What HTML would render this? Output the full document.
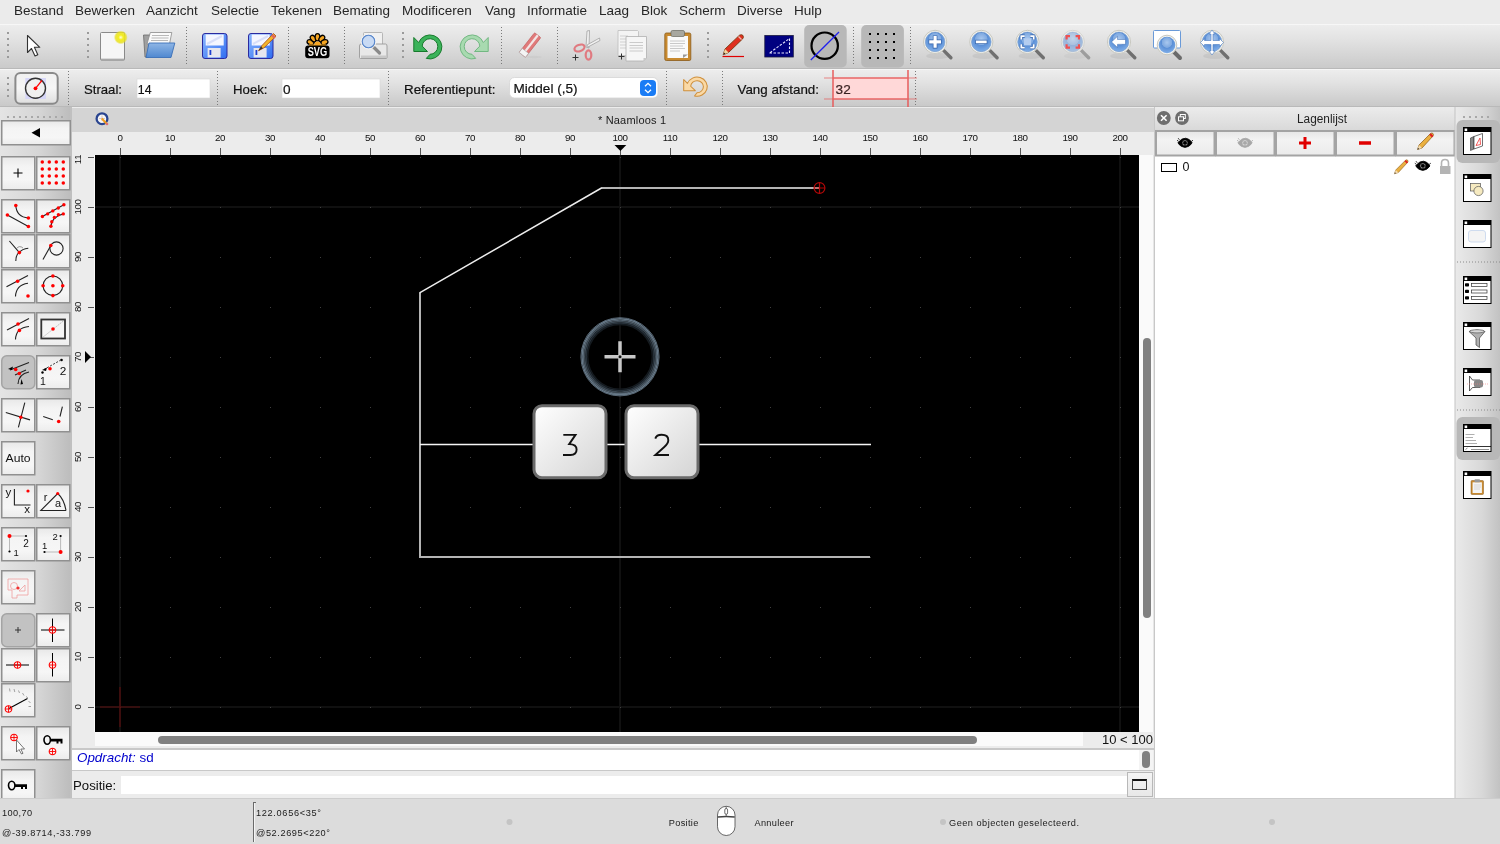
<!DOCTYPE html>
<html><head><meta charset="utf-8">
<style>
*{box-sizing:border-box}
html,body{margin:0;padding:0}
body{width:1500px;height:844px;position:relative;overflow:hidden;font-family:"Liberation Sans",sans-serif;background:#ececec;color:#222}
.a{position:absolute}
#menubar{left:0;top:0;width:1500px;height:24px;background:#ebebeb}
#menubar span{position:absolute;top:3.3px;font-size:13.5px;color:#262626;white-space:nowrap}
#tb1{left:0;top:24px;width:1500px;height:45px;background:linear-gradient(#ededed,#e2e2e2 35%,#cacaca);border-top:1px solid #f7f7f7;border-bottom:1px solid #b9b9b9}
#tb2{left:0;top:69px;width:1500px;height:38px;background:linear-gradient(#ededed,#e2e2e2 35%,#c9c9c9);border-top:1px solid #f6f6f6;border-bottom:1px solid #b9b9b9}
.sep{position:absolute;width:2px;border-left:2px dotted #8a8a8a}
#leftdock{left:0;top:107px;width:72px;height:691px;background:linear-gradient(90deg,#e6e6e6,#d8d8d8 60%,#c4c4c4);border-right:2px solid #c2c2c2}
.btn{position:absolute;width:34px;height:34px;background:linear-gradient(#f6f6f6,#ececec 50%,#e2e2e2);border:1.5px solid #9c9c9c}
.btn.on{background:#c4c4c4;border-color:#a8a8a8;border-radius:5px}
#mdi{left:72px;top:107px;width:1083px;height:691px;background:#ececec}
#mdititle{left:0;top:0.5px;width:1083px;height:24.2px;background:#d4d4d4;font-size:12px;text-align:center;line-height:24px;color:#222}
#canvas{left:95px;top:155px;width:1044px;height:577px;background:#000;overflow:hidden}
#rpanel{left:1155px;top:107px;width:300px;height:691px;background:#fff;border-left:1px solid #cfcfcf}
#rdock{left:1455px;top:107px;width:45px;height:691px;background:linear-gradient(90deg,#e8e8e8,#d6d6d6 70%,#c6c6c6);border-left:1px solid #c8c8c8}
#status{left:0;top:798px;width:1500px;height:46px;background:#dcdcdc;font-size:10px;color:#1e1e1e;border-top:1px solid #cfcfcf}
#status span{position:absolute;white-space:nowrap;letter-spacing:0.3px}
</style></head>
<body><div id="root" style="position:absolute;left:0;top:0;width:1500px;height:844px;will-change:transform;overflow:hidden">
<div id="menubar" class="a">
<span style="left:14px">Bestand</span><span style="left:75px">Bewerken</span><span style="left:146px">Aanzicht</span><span style="left:211px">Selectie</span><span style="left:271px">Tekenen</span><span style="left:333px">Bemating</span><span style="left:402px">Modificeren</span><span style="left:485px">Vang</span><span style="left:527px">Informatie</span><span style="left:599px">Laag</span><span style="left:641px">Blok</span><span style="left:679px">Scherm</span><span style="left:737px">Diverse</span><span style="left:794px">Hulp</span>
</div>
<div id="tb1" class="a"></div>
<svg class="a" style="left:0;top:24px" width="1500" height="44" viewBox="0 24 1500 44">
<defs>
<radialGradient id="mg" cx="0.5" cy="0.35" r="0.6"><stop offset="0" stop-color="#a9c8ef"/><stop offset="0.5" stop-color="#7fa9e0"/><stop offset="0.55" stop-color="#5b8fd6"/><stop offset="1" stop-color="#7aaae6"/></radialGradient>
<radialGradient id="glow" cx="0.5" cy="0.5" r="0.5"><stop offset="0" stop-color="#fffde0"/><stop offset="0.35" stop-color="#f4ee20"/><stop offset="0.75" stop-color="#e8e018" stop-opacity="0.8"/><stop offset="1" stop-color="#e8e018" stop-opacity="0"/></radialGradient>
<linearGradient id="fl" x1="0" y1="0" x2="0" y2="1"><stop offset="0" stop-color="#8fb6e6"/><stop offset="1" stop-color="#4f88d0"/></linearGradient>
<linearGradient id="sv" x1="0" y1="0" x2="1" y2="1"><stop offset="0" stop-color="#8cb8ff"/><stop offset="1" stop-color="#2f6cf0"/></linearGradient>
<g id="mag"><ellipse cx="3" cy="14" rx="12" ry="3" fill="#000" opacity="0.06"/><path d="M8.5 8.5L15.8 15.8" stroke="#707070" stroke-width="3.4" stroke-linecap="round"/><circle r="11.6" fill="#f2f2ee" stroke="#c8c8c0" stroke-width="1"/><circle r="9.8" fill="url(#mg)" stroke="#6f95c8" stroke-width="0.6"/></g>
</defs>
<rect x="7" y="32" width="2" height="2" fill="#9a9a9a"/><rect x="7" y="38" width="2" height="2" fill="#9a9a9a"/><rect x="7" y="44" width="2" height="2" fill="#9a9a9a"/><rect x="7" y="50" width="2" height="2" fill="#9a9a9a"/><rect x="7" y="56" width="2" height="2" fill="#9a9a9a"/>
<rect x="87" y="32" width="2" height="2" fill="#9a9a9a"/><rect x="87" y="38" width="2" height="2" fill="#9a9a9a"/><rect x="87" y="44" width="2" height="2" fill="#9a9a9a"/><rect x="87" y="50" width="2" height="2" fill="#9a9a9a"/><rect x="87" y="56" width="2" height="2" fill="#9a9a9a"/>
<line x1="186.5" y1="27" x2="186.5" y2="66" stroke="#7a7a7a" stroke-width="1" stroke-dasharray="1 2"/>
<line x1="288.5" y1="27" x2="288.5" y2="66" stroke="#7a7a7a" stroke-width="1" stroke-dasharray="1 2"/>
<line x1="344.5" y1="27" x2="344.5" y2="66" stroke="#7a7a7a" stroke-width="1" stroke-dasharray="1 2"/>
<rect x="402" y="32" width="2" height="2" fill="#9a9a9a"/><rect x="402" y="38" width="2" height="2" fill="#9a9a9a"/><rect x="402" y="44" width="2" height="2" fill="#9a9a9a"/><rect x="402" y="50" width="2" height="2" fill="#9a9a9a"/><rect x="402" y="56" width="2" height="2" fill="#9a9a9a"/>
<line x1="501.5" y1="27" x2="501.5" y2="66" stroke="#7a7a7a" stroke-width="1" stroke-dasharray="1 2"/>
<line x1="557.5" y1="27" x2="557.5" y2="66" stroke="#7a7a7a" stroke-width="1" stroke-dasharray="1 2"/>
<rect x="707" y="32" width="2" height="2" fill="#9a9a9a"/><rect x="707" y="38" width="2" height="2" fill="#9a9a9a"/><rect x="707" y="44" width="2" height="2" fill="#9a9a9a"/><rect x="707" y="50" width="2" height="2" fill="#9a9a9a"/><rect x="707" y="56" width="2" height="2" fill="#9a9a9a"/>
<line x1="853.5" y1="27" x2="853.5" y2="66" stroke="#7a7a7a" stroke-width="1" stroke-dasharray="1 2"/>
<line x1="910.5" y1="27" x2="910.5" y2="66" stroke="#7a7a7a" stroke-width="1" stroke-dasharray="1 2"/>
<path d="M27.5 35.5V52.5L31.5 48.5L35 56L37.8 54.7L34.4 47.3H39.8Z" fill="#fff" stroke="#333" stroke-width="1.1" stroke-linejoin="round"/>
<rect x="100.5" y="32.5" width="24" height="27.5" rx="1" fill="#f6f6f6" stroke="#8a8a8a" stroke-width="1"/><rect x="101" y="58.5" width="23.5" height="2" fill="#9a9a9a" opacity="0.6"/>
<circle cx="120.8" cy="37.4" r="7" fill="url(#glow)"/>
<path d="M143.5 35H150L149 57H145Z" fill="#a0a0a0" stroke="#6a6a6a" stroke-width="0.8"/>
<path d="M150.3 32.5H171.8L169.5 44H147Z" fill="#fafafa" stroke="#8a8a8a" stroke-width="0.8"/><path d="M152 35.5H169M151.5 38H168.5M151 40.5H168" stroke="#b8b8b8" stroke-width="1.2"/>
<path d="M149 43H174.8L171 57.5H146Z" fill="url(#fl)" stroke="#3a6fb8" stroke-width="0.9"/>
<rect x="202.5" y="33.5" width="24.5" height="25" rx="2.5" fill="url(#sv)" stroke="#2a2aa0" stroke-width="1"/><rect x="205.7" y="34.5" width="18" height="11" fill="#f4f6ff"/><path d="M207 44L222 36" stroke="#d8def8" stroke-width="2"/><rect x="207.6" y="48" width="13" height="9.5" fill="#e6e6ee"/><rect x="209.5" y="50" width="1.8" height="5" fill="#2040d0"/>
<rect x="248.5" y="33.5" width="24.5" height="25" rx="2.5" fill="url(#sv)" stroke="#2a2aa0" stroke-width="1"/><rect x="251.7" y="34.5" width="18" height="11" fill="#f4f6ff"/><path d="M253 44L268 36" stroke="#d8def8" stroke-width="2"/><rect x="253.6" y="48" width="13" height="9.5" fill="#e6e6ee"/><rect x="255.5" y="50" width="1.8" height="5" fill="#2040d0"/>
<path d="M258.5 50.7L262 45.5L273.5 33.5L276 36L264 47.8Z" fill="#f3b52a" stroke="#a84a10" stroke-width="0.8"/><path d="M272 35L275 38" stroke="#e06a5a" stroke-width="2.5"/><path d="M258.5 50.7L261 46.5L263 48.3Z" fill="#333"/>
<g fill="#f5a623" stroke="#000" stroke-width="1.3"><ellipse cx="317.5" cy="37.2" rx="2.4" ry="3.6" transform="rotate(-72 317.5 44.5)"/><ellipse cx="317.5" cy="37.2" rx="2.4" ry="3.6" transform="rotate(-36 317.5 44.5)"/><ellipse cx="317.5" cy="37.2" rx="2.4" ry="3.6" transform="rotate(0 317.5 44.5)"/><ellipse cx="317.5" cy="37.2" rx="2.4" ry="3.6" transform="rotate(36 317.5 44.5)"/><ellipse cx="317.5" cy="37.2" rx="2.4" ry="3.6" transform="rotate(72 317.5 44.5)"/></g>
<path d="M309 45.5H326" stroke="#f5a623" stroke-width="2.2"/><circle cx="317.5" cy="44.5" r="3" fill="#f5a623"/>
<rect x="305.2" y="45.5" width="24.3" height="12.8" rx="3" fill="#000"/>
<text x="317.4" y="56.3" font-family="Liberation Sans" font-weight="bold" font-size="12.5" fill="#fff" text-anchor="middle" textLength="19.5" lengthAdjust="spacingAndGlyphs">SVG</text>
<rect x="363.5" y="32.5" width="19" height="14" rx="1" fill="#f0f0f0" stroke="#a8a8a8" stroke-width="0.8"/>
<path d="M361 44H385.5Q387 44 387 46V57.5Q387 58.5 386 58.5H360.5Q359.5 58.5 359.5 57.5V46Q359.5 44 361 44Z" fill="#e8e8e8" stroke="#9a9a9a" stroke-width="0.9"/><rect x="361" y="55.5" width="25" height="2.5" fill="#c8c8c8"/>
<path d="M372 45.5L379.5 53" stroke="#8a8a8a" stroke-width="3.2" stroke-linecap="round"/><circle cx="368.5" cy="41.5" r="6.3" fill="#c8daf4" stroke="#5a88cc" stroke-width="1.3"/><circle cx="368.5" cy="41.5" r="7.5" fill="none" stroke="#f4f4f4" stroke-width="1"/>
<path d="M413.8 37.5V51.5H427.5L422.2 46.1A7.8 7.8 0 1 1 430 54.3L426.3 58.4A12 12 0 1 0 418.7 42.5Z" fill="#3bb35a" stroke="#177a2c" stroke-width="1" stroke-linejoin="round"/>
<g transform="translate(902 0) scale(-1 1)"><path d="M413.8 37.5V51.5H427.5L422.2 46.1A7.8 7.8 0 1 1 430 54.3L426.3 58.4A12 12 0 1 0 418.7 42.5Z" fill="#a8dab0" stroke="#72b882" stroke-width="1" stroke-linejoin="round"/></g>
<g transform="translate(530 45) rotate(-52)"><rect x="-12.5" y="-4" width="25" height="8" rx="1" fill="#e07a7a" stroke="#c05a5a" stroke-width="0.6"/><rect x="-12.5" y="-1" width="25" height="2.2" fill="#f2e6e6"/><rect x="-12.5" y="-4" width="5" height="8" fill="#f4f4f4" stroke="#aaa" stroke-width="0.6"/></g><ellipse cx="534" cy="57" rx="8" ry="1.2" fill="#c8c8c8" opacity="0.6"/>
<path d="M587 31L589.5 30.5L589 48L586 47Z" fill="#f0f0f0" stroke="#9a9a9a" stroke-width="0.7"/><path d="M599.5 38L600 40.5L588 47L587 45Z" fill="#f0f0f0" stroke="#9a9a9a" stroke-width="0.7"/>
<ellipse cx="579.5" cy="48" rx="5.2" ry="3.2" transform="rotate(-20 579.5 48)" fill="none" stroke="#e07a80" stroke-width="2.2"/><ellipse cx="588.5" cy="55" rx="2.8" ry="4.6" fill="none" stroke="#e07a80" stroke-width="2.2"/>
<path d="M572.5 57.5H578.5M575.5 54.5V60.5" stroke="#333" stroke-width="1"/>
<path d="M618 30.5H637.5L638.5 31.5V55.5H618Z" fill="#f4f4f4" stroke="#bdbdbd" stroke-width="0.8"/><path d="M620 36H628M620 39H628M620 42H628M620 45H628M620 48H628" stroke="#c8c8c8" stroke-width="0.8"/>
<path d="M626 36.5H646.5V58L643.5 61H626Z" fill="#f6f6f6" stroke="#b0b0b0" stroke-width="0.8"/><path d="M629.5 42.5H643M629.5 45.5H643M629.5 48H643M629.5 51H643" stroke="#c0c0c0" stroke-width="0.8"/><path d="M643.5 61V58H646.5Z" fill="#c8c8c8"/>
<path d="M618.5 56.5H624.5M621.5 53.5V59.5" stroke="#333" stroke-width="1"/>
<rect x="664.8" y="33" width="26" height="27.5" rx="1.5" fill="#c88a30" stroke="#8a5a18" stroke-width="0.8"/><rect x="667.5" y="36" width="20.5" height="22" fill="#fafafa"/><path d="M670 41H685M670 43.5H685M670 46H683M670 48.5H685M670 51H680" stroke="#bdbdbd" stroke-width="0.8"/><path d="M683 58V54.5H688Z" fill="#9a9a9a"/>
<rect x="671" y="30.5" width="13.5" height="6" rx="1.5" fill="#a8a8a0" stroke="#6a6a60" stroke-width="0.7"/>
<path d="M722.5 56.5H744" stroke="#e00000" stroke-width="1.2"/>
<path d="M723.2 54.8L725 49L739.5 35.2Q741.5 34 743 35.5Q744 37.5 742.5 39L728.5 52.5Z" fill="#e03020" stroke="#7a3a10" stroke-width="0.9"/><path d="M723.2 54.8L725 49L728.5 52.5Z" fill="#f0d8a0"/><path d="M723.2 54.8L724 52.5L725.5 53.8Z" fill="#222"/><path d="M738.5 36.5L741.5 39.5" stroke="#f0b8b0" stroke-width="1.2"/>
<rect x="764.8" y="35.5" width="28.5" height="21.5" fill="#000080" stroke="#1a1a40" stroke-width="0.8"/>
<path d="M769.5 53H789.5V38.5Z" fill="none" stroke="#e8e8ff" stroke-width="1.1" stroke-dasharray="2.5 1.5"/>
<rect x="804.2" y="25" width="42.5" height="42.5" rx="5" fill="#b8b8b8"/>
<circle cx="824.7" cy="45.7" r="13.2" fill="none" stroke="#000" stroke-width="2.2"/><path d="M810.8 60L839 32" stroke="#2020ee" stroke-width="1.3"/>
<rect x="861.2" y="25" width="42.7" height="42.5" rx="5" fill="#b8b8b8"/>
<path d="M869 33h2v2h-2zM869 41h2v2h-2zM869 49h2v2h-2zM869 57h2v2h-2zM877 33h2v2h-2zM877 41h2v2h-2zM877 49h2v2h-2zM877 57h2v2h-2zM885 33h2v2h-2zM885 41h2v2h-2zM885 49h2v2h-2zM885 57h2v2h-2zM893 33h2v2h-2zM893 41h2v2h-2zM893 49h2v2h-2zM893 57h2v2h-2z" fill="#000"/>
<use href="#mag" x="935.1" y="41.9"/>
<use href="#mag" x="981.3" y="41.9"/>
<use href="#mag" x="1027.5" y="41.9"/>
<use href="#mag" x="1119" y="41.9"/>
<use href="#mag" x="1212" y="41.9"/>
<g opacity="0.55"><use href="#mag" x="1072.8" y="41.9"/></g>
<path d="M928.6 41.9H941.6M935.1 35.4V48.4" stroke="#3060a8" stroke-width="4.6"/><path d="M929.2 41.9H941M935.1 36V47.8" stroke="#fff" stroke-width="3.2"/>
<path d="M975.3 41.9H987.3" stroke="#3060a8" stroke-width="4.2"/><path d="M975.9 41.9H986.7" stroke="#fff" stroke-width="2.8"/>
<rect x="1024" y="38.4" width="7" height="7" fill="#b4cdf0"/>
<path d="M1021.3 39.5V36.1H1024.7M1030.3 36.1H1033.7V39.5M1033.7 44.3V47.7H1030.3M1024.7 47.7H1021.3V44.3" stroke="#3060a8" stroke-width="3.2" fill="none"/><path d="M1021.3 39.5V36.1H1024.7M1030.3 36.1H1033.7V39.5M1033.7 44.3V47.7H1030.3M1024.7 47.7H1021.3V44.3" stroke="#fff" stroke-width="1.8" fill="none"/>
<path d="M1066.6 39.5V36.1H1070M1075.6 36.1H1079V39.5M1079 44.3V47.7H1075.6M1070 47.7H1066.6V44.3" stroke="#ef5050" stroke-width="2.2" fill="none"/>
<path d="M1111.5 41.9L1117.5 36.3V39.5H1125.5V44.3H1117.5V47.5Z" fill="#fff" stroke="#3a6ab0" stroke-width="0.5"/>
<rect x="1153.5" y="30.5" width="27" height="17.5" rx="1" fill="#fff" stroke="#6a9ad8" stroke-width="1"/>
<g transform="translate(1167 45)"><path d="M6.5 6.5L13 13" stroke="#6a6a6a" stroke-width="4" stroke-linecap="round"/><circle r="9.8" fill="#f2f2ee" stroke="#c8c8c0" stroke-width="1"/><circle r="8.3" fill="url(#mg)"/></g>
<path d="M1212 30L1215 34H1213V40.5H1219.5V38.5L1223.5 42.5L1219.5 46.5V44.5H1213V51H1215L1212 55L1209 51H1211V44.5H1204.5V46.5L1200.5 42.5L1204.5 38.5V40.5H1211V34H1209Z" fill="#fff" stroke="#4a7ac0" stroke-width="0.6"/>
</svg>
<div id="tb2" class="a"></div>
<svg class="a" style="left:0;top:68px" width="1500" height="39" viewBox="0 68 1500 39">
<rect x="7" y="77" width="2" height="2" fill="#9a9a9a"/><rect x="7" y="83" width="2" height="2" fill="#9a9a9a"/><rect x="7" y="89" width="2" height="2" fill="#9a9a9a"/><rect x="7" y="95" width="2" height="2" fill="#9a9a9a"/>
<line x1="68.5" y1="71" x2="68.5" y2="106" stroke="#7a7a7a" stroke-width="1" stroke-dasharray="1 2"/>
<line x1="217.5" y1="71" x2="217.5" y2="106" stroke="#7a7a7a" stroke-width="1" stroke-dasharray="1 2"/>
<line x1="388.5" y1="71" x2="388.5" y2="106" stroke="#7a7a7a" stroke-width="1" stroke-dasharray="1 2"/>
<line x1="666.5" y1="71" x2="666.5" y2="106" stroke="#7a7a7a" stroke-width="1" stroke-dasharray="1 2"/>
<line x1="722.5" y1="71" x2="722.5" y2="106" stroke="#7a7a7a" stroke-width="1" stroke-dasharray="1 2"/>
<line x1="915.5" y1="71" x2="915.5" y2="106" stroke="#7a7a7a" stroke-width="1" stroke-dasharray="1 2"/>
<defs><linearGradient id="bg2" x1="0" y1="0" x2="0" y2="1"><stop offset="0" stop-color="#f0f0f0"/><stop offset="0.5" stop-color="#f6f6f6"/><stop offset="1" stop-color="#dedede"/></linearGradient></defs>
<rect x="15.4" y="73" width="42.3" height="30.8" rx="5" fill="url(#bg2)" stroke="#8a8a8a" stroke-width="2"/>
<rect x="25.3" y="78" width="20.7" height="21" fill="#d4d4f8" opacity="0.9"/>
<circle cx="35.5" cy="88.3" r="10" fill="#f0f0f0" stroke="#333" stroke-width="1.4"/><path d="M35.5 88.3L41.9 80.5" stroke="#f00" stroke-width="1.2"/><circle cx="35.5" cy="88.3" r="1.9" fill="#f00"/>
<g font-family="Liberation Sans" font-size="13.6" fill="#111" stroke="#111" stroke-width="0.2">
<text x="84" y="93.5" textLength="38" lengthAdjust="spacingAndGlyphs">Straal:</text>
<text x="233" y="93.5" textLength="34.5" lengthAdjust="spacingAndGlyphs">Hoek:</text>
<text x="404" y="93.5" textLength="91.5" lengthAdjust="spacingAndGlyphs">Referentiepunt:</text>
<text x="737.5" y="93.5" textLength="81.5" lengthAdjust="spacingAndGlyphs">Vang afstand:</text>
</g>
<rect x="137" y="79" width="73" height="19" fill="#fff" stroke="#d8d8d8" stroke-width="0.6"/>
<rect x="282" y="79" width="98" height="19" fill="#fff" stroke="#d8d8d8" stroke-width="0.6"/>
<g font-family="Liberation Sans" font-size="13.6" fill="#111" stroke="#111" stroke-width="0.2"><text x="137.8" y="93.6" textLength="13.7" lengthAdjust="spacingAndGlyphs">14</text><text x="283" y="93.6">0</text></g>
<rect x="509.5" y="77.5" width="148.5" height="20.5" rx="5" fill="#fff" stroke="#d4d4d4" stroke-width="0.8"/>
<text x="513.5" y="92.8" font-family="Liberation Sans" font-size="13.6" fill="#111" stroke="#111" stroke-width="0.2" textLength="64" lengthAdjust="spacingAndGlyphs">Middel (,5)</text>
<rect x="640" y="80" width="16" height="16" rx="4" fill="#1a7cf5"/><path d="M645 86.3L648 83.3L651 86.3M645 89.7L648 92.7L651 89.7" stroke="#fff" stroke-width="1.3" fill="none"/>
<g transform="translate(683.7 77.5) scale(0.85 0.8) translate(-413.8 -35)"><path d="M413.8 37.5V51.5H427.5L422 45.9A7.5 7.5 0 1 1 429.5 54L426.5 58.1A12 12 0 1 0 418.2 42.4Z" fill="#fad9a6" stroke="#cf8f3a" stroke-width="1.2" stroke-linejoin="round"/></g>
<rect x="833" y="78" width="75" height="21" fill="#ffd8d8"/>
<g stroke="#e85858" stroke-width="1.6"><path d="M833 78H908M833 99H908M833 70V107M908 70V107" opacity="0.9"/><path d="M824 78H833M908 78H917M824 99H833M908 99H917" opacity="0.45"/></g>
<text x="835.6" y="93.6" font-family="Liberation Sans" font-size="13.6" fill="#3a2222" stroke="#3a2222" stroke-width="0.2">32</text>
</svg>
<div id="leftdock" class="a"></div>
<svg class="a" style="left:0;top:107px" width="72" height="691" viewBox="0 107 72 691">
<defs>
<linearGradient id="dk" x1="0" y1="0" x2="1" y2="0"><stop offset="0" stop-color="#e4e4e4"/><stop offset="0.55" stop-color="#d6d6d6"/><stop offset="1" stop-color="#bdbdbd"/></linearGradient>
<linearGradient id="lb" x1="0" y1="0" x2="0" y2="1"><stop offset="0" stop-color="#e8e8e8"/><stop offset="0.3" stop-color="#f4f4f4"/><stop offset="0.7" stop-color="#f6f6f6"/><stop offset="1" stop-color="#ececec"/></linearGradient>
<g id="rc"><circle r="3.3" fill="none" stroke="#f00" stroke-width="1.1"/><path d="M-3.3 0H3.3M0 -3.3V3.3" stroke="#f00" stroke-width="0.9"/></g>
<g id="key"><ellipse cx="3.2" cy="0" rx="3.2" ry="4.2" fill="none" stroke="#000" stroke-width="1.6"/><path d="M6.4 -1.2H18.5V3.6H16.5V1.4H14.5V3.6H12.5V1.4H6.4Z" fill="#000"/></g>
</defs>
<rect x="0" y="107" width="70" height="691" fill="url(#dk)"/>
<rect x="70" y="107" width="2" height="691" fill="#c0c0c0"/>
<rect x="7" y="116" width="2" height="2" fill="#a8a8a8"/><rect x="13" y="116" width="2" height="2" fill="#a8a8a8"/><rect x="19" y="116" width="2" height="2" fill="#a8a8a8"/><rect x="25" y="116" width="2" height="2" fill="#a8a8a8"/><rect x="31" y="116" width="2" height="2" fill="#a8a8a8"/><rect x="37" y="116" width="2" height="2" fill="#a8a8a8"/><rect x="43" y="116" width="2" height="2" fill="#a8a8a8"/><rect x="49" y="116" width="2" height="2" fill="#a8a8a8"/><rect x="55" y="116" width="2" height="2" fill="#a8a8a8"/><rect x="61" y="116" width="2" height="2" fill="#a8a8a8"/>
<rect x="1.75" y="120.75" width="68.5" height="24" fill="url(#lb)" stroke="#909090" stroke-width="1.5"/>
<path d="M31.5 132.8L40 128V137.6Z" fill="#000"/>
<rect x="1.75" y="156.75" width="33" height="33" fill="url(#lb)" stroke="#909090" stroke-width="1.5"/>
<rect x="36.75" y="156.75" width="33" height="33" fill="url(#lb)" stroke="#909090" stroke-width="1.5"/>
<rect x="1.75" y="199.75" width="33" height="33" fill="url(#lb)" stroke="#909090" stroke-width="1.5"/>
<rect x="36.75" y="199.75" width="33" height="33" fill="url(#lb)" stroke="#909090" stroke-width="1.5"/>
<rect x="1.75" y="234.75" width="33" height="33" fill="url(#lb)" stroke="#909090" stroke-width="1.5"/>
<rect x="36.75" y="234.75" width="33" height="33" fill="url(#lb)" stroke="#909090" stroke-width="1.5"/>
<rect x="1.75" y="269.75" width="33" height="33" fill="url(#lb)" stroke="#909090" stroke-width="1.5"/>
<rect x="36.75" y="269.75" width="33" height="33" fill="url(#lb)" stroke="#909090" stroke-width="1.5"/>
<rect x="1.75" y="312.75" width="33" height="33" fill="url(#lb)" stroke="#909090" stroke-width="1.5"/>
<rect x="36.75" y="312.75" width="33" height="33" fill="url(#lb)" stroke="#909090" stroke-width="1.5"/>
<rect x="1.75" y="355.75" width="33" height="33" rx="5" fill="#c2c2c2" stroke="#a4a4a4" stroke-width="1.5"/>
<rect x="36.75" y="355.75" width="33" height="33" fill="url(#lb)" stroke="#909090" stroke-width="1.5"/>
<rect x="1.75" y="398.75" width="33" height="33" fill="url(#lb)" stroke="#909090" stroke-width="1.5"/>
<rect x="36.75" y="398.75" width="33" height="33" fill="url(#lb)" stroke="#909090" stroke-width="1.5"/>
<rect x="1.75" y="441.75" width="33" height="33" fill="url(#lb)" stroke="#909090" stroke-width="1.5"/>
<rect x="1.75" y="484.75" width="33" height="33" fill="url(#lb)" stroke="#909090" stroke-width="1.5"/>
<rect x="36.75" y="484.75" width="33" height="33" fill="url(#lb)" stroke="#909090" stroke-width="1.5"/>
<rect x="1.75" y="527.75" width="33" height="33" fill="url(#lb)" stroke="#909090" stroke-width="1.5"/>
<rect x="36.75" y="527.75" width="33" height="33" fill="url(#lb)" stroke="#909090" stroke-width="1.5"/>
<rect x="1.75" y="570.75" width="33" height="33" fill="url(#lb)" stroke="#909090" stroke-width="1.5"/>
<rect x="1.75" y="613.75" width="33" height="33" rx="5" fill="#c2c2c2" stroke="#a4a4a4" stroke-width="1.5"/>
<rect x="36.75" y="613.75" width="33" height="33" fill="url(#lb)" stroke="#909090" stroke-width="1.5"/>
<rect x="1.75" y="648.75" width="33" height="33" fill="url(#lb)" stroke="#909090" stroke-width="1.5"/>
<rect x="36.75" y="648.75" width="33" height="33" fill="url(#lb)" stroke="#909090" stroke-width="1.5"/>
<rect x="1.75" y="683.75" width="33" height="33" fill="url(#lb)" stroke="#909090" stroke-width="1.5"/>
<rect x="1.75" y="726.75" width="33" height="33" fill="url(#lb)" stroke="#909090" stroke-width="1.5"/>
<rect x="36.75" y="726.75" width="33" height="33" fill="url(#lb)" stroke="#909090" stroke-width="1.5"/>
<rect x="1.75" y="769.75" width="33" height="33" fill="url(#lb)" stroke="#909090" stroke-width="1.5"/>
<path d="M13.5 173H22.5M18 168.5V177.5" stroke="#000" stroke-width="1.1"/>
<circle cx="42.3" cy="162" r="1.75" fill="#f00"/><circle cx="42.3" cy="169" r="1.75" fill="#f00"/><circle cx="42.3" cy="176" r="1.75" fill="#f00"/><circle cx="42.3" cy="183" r="1.75" fill="#f00"/><circle cx="49.3" cy="162" r="1.75" fill="#f00"/><circle cx="49.3" cy="169" r="1.75" fill="#f00"/><circle cx="49.3" cy="176" r="1.75" fill="#f00"/><circle cx="49.3" cy="183" r="1.75" fill="#f00"/><circle cx="56.3" cy="162" r="1.75" fill="#f00"/><circle cx="56.3" cy="169" r="1.75" fill="#f00"/><circle cx="56.3" cy="176" r="1.75" fill="#f00"/><circle cx="56.3" cy="183" r="1.75" fill="#f00"/><circle cx="63.3" cy="162" r="1.75" fill="#f00"/><circle cx="63.3" cy="169" r="1.75" fill="#f00"/><circle cx="63.3" cy="176" r="1.75" fill="#f00"/><circle cx="63.3" cy="183" r="1.75" fill="#f00"/>
<path d="M7.4 215L28.4 226.5M15.8 205.5Q16.5 217 28.4 218" stroke="#222" stroke-width="1.1" fill="none"/><circle cx="7.4" cy="215" r="1.8" fill="#f00"/><circle cx="28.4" cy="226.5" r="1.8" fill="#f00"/><circle cx="15.8" cy="205.5" r="1.8" fill="#f00"/><circle cx="28.4" cy="218" r="1.8" fill="#f00"/>
<path d="M42.4 216.5L63.9 204.8M50.9 226.3Q51.5 217 63.3 213.9" stroke="#222" stroke-width="1.1" fill="none"/><circle cx="42.4" cy="216.5" r="1.7" fill="#f00"/><circle cx="47.6" cy="213.9" r="1.7" fill="#f00"/><circle cx="52.8" cy="210.9" r="1.7" fill="#f00"/><circle cx="58.3" cy="208" r="1.7" fill="#f00"/><circle cx="63.9" cy="204.8" r="1.7" fill="#f00"/><circle cx="50.9" cy="226.3" r="1.7" fill="#f00"/><circle cx="51.8" cy="221.7" r="1.7" fill="#f00"/><circle cx="54.4" cy="217.4" r="1.7" fill="#f00"/><circle cx="58.4" cy="214.8" r="1.7" fill="#f00"/><circle cx="63.3" cy="213.9" r="1.7" fill="#f00"/>
<path d="M9.4 241L19.4 252.6M15.8 261Q16 254 19.4 252.6Q22 249 28.3 248.3" stroke="#222" stroke-width="1.1" fill="none"/><path d="M16.5 248.5Q19.5 245 23 248" stroke="#555" stroke-width="0.6" fill="none"/><circle cx="19.4" cy="252.6" r="1.8" fill="#f00"/>
<circle cx="56.5" cy="248.5" r="6.6" stroke="#222" stroke-width="1.1" fill="none"/><path d="M43 259.5L50.8 245.5" stroke="#222" stroke-width="1.1" fill="none"/><circle cx="50.8" cy="245.5" r="1.8" fill="#f00"/>
<path d="M6.5 286.7L28 275.5M15.5 296.5Q16 285 28 283.3" stroke="#222" stroke-width="1.1" fill="none"/><circle cx="17.6" cy="281.2" r="1.8" fill="#f00"/><circle cx="28" cy="296" r="1.8" fill="#f00"/>
<circle cx="52.9" cy="285.8" r="9.8" stroke="#222" stroke-width="1.1" fill="none"/><circle cx="52.9" cy="276" r="1.8" fill="#f00"/><circle cx="43.1" cy="285.8" r="1.8" fill="#f00"/><circle cx="62.7" cy="285.8" r="1.8" fill="#f00"/><circle cx="52.9" cy="295.6" r="1.8" fill="#f00"/><circle cx="52.9" cy="285.8" r="1.8" fill="#f00"/>
<path d="M7 330L29 318.5M15.5 339.5Q16 327.5 29 326.5" stroke="#222" stroke-width="1.1" fill="none"/><circle cx="18" cy="324" r="1.8" fill="#f00"/><circle cx="19.4" cy="330.4" r="1.8" fill="#f00"/>
<rect x="41.3" y="319.5" width="23.7" height="19" fill="none" stroke="#333" stroke-width="1.8"/><path d="M42.5 337.5L64 320.5" stroke="#999" stroke-width="0.7" stroke-dasharray="1.5 1"/><circle cx="53" cy="329" r="1.8" fill="#f00"/>
<path d="M10 370L29 362.5M15 375L26 370M18 384Q18.5 374 29 372" stroke="#222" stroke-width="1.1" fill="none"/><path d="M8 369L13 366.5L12 370Z" fill="#000"/><path d="M20.5 384.5L21.5 379L23 384Z" fill="#000"/><circle cx="15.7" cy="369.5" r="1.8" fill="#f00"/><circle cx="19.3" cy="373.5" r="1.8" fill="#f00"/>
<path d="M44 369.5L60 360.5" stroke="#222" stroke-width="0.9" stroke-dasharray="2 1.5"/><path d="M42 370L47 367.5L46 371Z" fill="#000"/><circle cx="42.5" cy="372.5" r="1.2" fill="#000"/><circle cx="61.5" cy="360" r="1.3" fill="#000"/><circle cx="50" cy="368.8" r="1.8" fill="#f00"/>
<text x="40" y="384.5" font-family="Liberation Sans" font-size="10.5" fill="#111">1</text><text x="59.8" y="375.2" font-family="Liberation Sans" font-size="11.8" fill="#111">2</text>
<path d="M5.8 412.5L30 419.9M24.8 402.6L18.4 427.4" stroke="#222" stroke-width="1.1" fill="none"/><circle cx="20.8" cy="417.3" r="1.8" fill="#f00"/>
<path d="M43.2 416.5L52.8 419.7M62.4 406.6L60 416.5" stroke="#222" stroke-width="1.1" fill="none"/><circle cx="58.7" cy="421.5" r="1.8" fill="#f00"/>
<text x="5.6" y="462.3" font-family="Liberation Sans" font-size="11.6" fill="#111" textLength="25" lengthAdjust="spacingAndGlyphs">Auto</text>
<path d="M14.4 489V505H30.5" stroke="#222" stroke-width="1.1" fill="none"/><circle cx="28" cy="491" r="1.6" fill="#f00"/><text x="5.6" y="495.5" font-family="Liberation Sans" font-size="11.5" fill="#111">y</text><text x="24.3" y="512.7" font-family="Liberation Sans" font-size="11.5" fill="#111">x</text>
<path d="M66 510.5H40.8L57.7 493.5Q64 499 66 510.5" stroke="#222" stroke-width="1.1" fill="none"/><circle cx="57.7" cy="493.5" r="1.6" fill="#f00"/><text x="43.8" y="501.2" font-family="Liberation Sans" font-size="11" fill="#111">r</text><text x="55" y="507.3" font-family="Liberation Sans" font-size="11" fill="#111">a</text>
<path d="M9.5 536H26M9.5 536V551.5" stroke="#aaa" stroke-width="0.8"/><circle cx="9.5" cy="536" r="2" fill="#f00"/><circle cx="9.5" cy="551.5" r="1.1" fill="#000"/><circle cx="26" cy="536" r="1.1" fill="#000"/><text x="13.5" y="556" font-family="Liberation Sans" font-size="9.5" fill="#111">1</text><text x="23.3" y="546.5" font-family="Liberation Sans" font-size="10" fill="#111">2</text>
<path d="M44.5 552H60.6M60.6 536V552" stroke="#aaa" stroke-width="0.8"/><circle cx="60.6" cy="552" r="2" fill="#f00"/><circle cx="44.5" cy="552" r="1.1" fill="#000"/><circle cx="60.6" cy="536" r="1.1" fill="#000"/><text x="42" y="549" font-family="Liberation Sans" font-size="9.5" fill="#111">1</text><text x="52.5" y="540" font-family="Liberation Sans" font-size="9.5" fill="#111">2</text>
<g stroke="#f0a0a0" stroke-width="0.8" fill="none"><path d="M8 579H28V595H17V598H12V590H8Z"/><circle cx="14" cy="586" r="3.5"/><path d="M19 591L25 585V591Z"/></g><circle cx="18" cy="588" r="1.6" fill="#f03030"/>
<path d="M15 630H21M18 627V633" stroke="#333" stroke-width="1"/>
<path d="M41 630H64.5M52.5 618.5V642" stroke="#000" stroke-width="1"/><use href="#rc" x="52.5" y="630"/>
<path d="M6 665H29" stroke="#000" stroke-width="1"/><use href="#rc" x="17.5" y="665"/>
<path d="M52.5 653V676.5" stroke="#000" stroke-width="1"/><use href="#rc" x="52.5" y="665"/>
<path d="M9 708.5L27.5 698.5" stroke="#000" stroke-width="1.1"/><g stroke="#999" stroke-width="0.9"><path d="M9.5 688.5L10 691.5M14 689L14.8 692M18.5 690.5L19.5 693M22.5 693L24 695.5M26 696.5L28 698M28.5 701.5L30.5 702.5M28.5 706.5H31"/></g><use href="#rc" x="8.5" y="709"/>
<use href="#rc" x="14" y="737.5"/><path d="M16.5 740V752L19 749.5L21.5 754L23 753.3L20.8 749H24.5Z" fill="#fff" stroke="#555" stroke-width="0.8"/>
<use href="#key" x="44" y="740"/><use href="#rc" x="52.5" y="751.5"/>
<use href="#key" x="8.5" y="785.5"/>
</svg>
<div id="mdi" class="a">
 <div id="mdititle" class="a"></div>
 <svg class="a" style="left:0;top:0" width="1083" height="24" viewBox="72 107 1083 24">
 <text x="598" y="123.9" font-family="Liberation Sans" font-size="11" fill="#1a1a1a" textLength="68" lengthAdjust="spacing">* Naamloos 1</text>
 <circle cx="102" cy="118.7" r="5.4" fill="#f6f6f6" stroke="#2a4590" stroke-width="2.3"/>
 <path d="M99 118.5H105M102 115.5V121" stroke="#c8a8a8" stroke-width="0.6"/>
 <path d="M101.8 118.5L106.5 123.5" stroke="#f0a020" stroke-width="2"/><circle cx="107" cy="124" r="1.3" fill="#e07070"/>
 </svg>
</div>
<svg class="a" style="left:72px;top:131px" width="1083" height="24" viewBox="72 131 1083 24">
<g font-family="Liberation Sans" font-size="9.8" fill="#111" text-anchor="middle" letter-spacing="-0.45">
<text x="120" y="140.7">0</text>
<text x="170" y="140.7">10</text>
<text x="220" y="140.7">20</text>
<text x="270" y="140.7">30</text>
<text x="320" y="140.7">40</text>
<text x="370" y="140.7">50</text>
<text x="420" y="140.7">60</text>
<text x="470" y="140.7">70</text>
<text x="520" y="140.7">80</text>
<text x="570" y="140.7">90</text>
<text x="620" y="140.7">100</text>
<text x="670" y="140.7">110</text>
<text x="720" y="140.7">120</text>
<text x="770" y="140.7">130</text>
<text x="820" y="140.7">140</text>
<text x="870" y="140.7">150</text>
<text x="920" y="140.7">160</text>
<text x="970" y="140.7">170</text>
<text x="1020" y="140.7">180</text>
<text x="1070" y="140.7">190</text>
<text x="1120" y="140.7">200</text>
</g>
<path d="M120.5 148V155M170.5 148V155M220.5 148V155M270.5 148V155M320.5 148V155M370.5 148V155M420.5 148V155M470.5 148V155M520.5 148V155M570.5 148V155M620.5 148V155M670.5 148V155M720.5 148V155M770.5 148V155M820.5 148V155M870.5 148V155M920.5 148V155M970.5 148V155M1020.5 148V155M1070.5 148V155M1120.5 148V155" stroke="#555" stroke-width="1"/>
<path d="M614.5 145H626.3L620.4 151Z" fill="#000"/>
</svg>
<svg class="a" style="left:72px;top:155px" width="23" height="577" viewBox="72 155 23 577">
<g font-family="Liberation Sans" font-size="9.8" fill="#111" text-anchor="middle" letter-spacing="-0.45">
<text x="0" y="0" transform="translate(81.3 707) rotate(-90)">0</text>
<text x="0" y="0" transform="translate(81.3 657) rotate(-90)">10</text>
<text x="0" y="0" transform="translate(81.3 607) rotate(-90)">20</text>
<text x="0" y="0" transform="translate(81.3 557) rotate(-90)">30</text>
<text x="0" y="0" transform="translate(81.3 507) rotate(-90)">40</text>
<text x="0" y="0" transform="translate(81.3 457) rotate(-90)">50</text>
<text x="0" y="0" transform="translate(81.3 407) rotate(-90)">60</text>
<text x="0" y="0" transform="translate(81.3 357) rotate(-90)">70</text>
<text x="0" y="0" transform="translate(81.3 307) rotate(-90)">80</text>
<text x="0" y="0" transform="translate(81.3 257) rotate(-90)">90</text>
<text x="0" y="0" transform="translate(81.3 207) rotate(-90)">100</text>
<text x="0" y="0" transform="translate(81.3 157) rotate(-90)">110</text>
</g>
<path d="M88 707.5H95M88 657.5H95M88 607.5H95M88 557.5H95M88 507.5H95M88 457.5H95M88 407.5H95M88 357.5H95M88 307.5H95M88 257.5H95M88 207.5H95M88 157.5H95" stroke="#555" stroke-width="1"/>
<path d="M85 351V363L91 357Z" fill="#000"/>
</svg>
<div class="a" style="left:94px;top:155px;width:1px;height:577px;background:#fafafa"></div>
<div class="a" style="left:1139px;top:155px;width:14px;height:577px;background:#fafafa"></div>
<div class="a" style="left:1153px;top:155px;width:2px;height:577px;background:#e6e6e6"></div>
<div class="a" style="left:1143px;top:338px;width:8px;height:280px;background:#808080;border-radius:4px"></div>
<div class="a" style="left:95px;top:732px;width:988px;height:14px;background:#fafafa"></div>
<div class="a" style="left:158px;top:736px;width:819px;height:8px;background:#808080;border-radius:4px"></div>
<div class="a" style="left:1083px;top:732px;width:72px;height:16px;background:#ececec;font-size:13px;color:#111;line-height:16px;text-align:right;padding-right:2px">10 &lt; 100</div>
<div class="a" style="left:72px;top:748px;width:1083px;height:2px;background:#c8c8c8"></div>
<div class="a" style="left:72px;top:750px;width:1081px;height:20px;background:#fff"></div>
<div class="a" style="left:77px;top:749.5px;font-size:13.4px;line-height:16px;color:#0000cc;white-space:nowrap"><i>Opdracht:</i> sd</div>
<div class="a" style="left:1139px;top:750px;width:14px;height:20px;background:#f4f4f4"></div>
<div class="a" style="left:1142px;top:751px;width:8px;height:17px;background:#808080;border-radius:4px"></div>
<div class="a" style="left:72px;top:770px;width:1083px;height:1px;background:#c8c8c8"></div>
<div class="a" style="left:72px;top:771px;width:1083px;height:27px;background:#ececec"></div>
<div class="a" style="left:73px;top:777.5px;font-size:13.2px;line-height:16px;color:#111">Positie:</div>
<div class="a" style="left:121px;top:776px;width:1006px;height:18px;background:#fff"></div>
<div class="a" style="left:1127px;top:772px;width:26px;height:25px;background:linear-gradient(#f4f4f4,#e8e8e8);border:1px solid #b8b8b8"></div>
<div class="a" style="left:1132px;top:779px;width:15px;height:11px;border:1px solid #444;border-top:2.5px solid #111"></div>

<div id="canvas" class="a">
<svg class="a" style="left:0;top:0" width="1044" height="577" viewBox="0 0 1044 577">
<path d="M25 0V577M525 0V577M1025 0V577M0 52H1044M0 552H1044" stroke="#101010" stroke-width="2"/>
<path d="M25 552h1v1h-1zM25 502h1v1h-1zM25 452h1v1h-1zM25 402h1v1h-1zM25 352h1v1h-1zM25 302h1v1h-1zM25 252h1v1h-1zM25 202h1v1h-1zM25 152h1v1h-1zM25 102h1v1h-1zM25 52h1v1h-1zM25 2h1v1h-1zM75 552h1v1h-1zM75 502h1v1h-1zM75 452h1v1h-1zM75 402h1v1h-1zM75 352h1v1h-1zM75 302h1v1h-1zM75 252h1v1h-1zM75 202h1v1h-1zM75 152h1v1h-1zM75 102h1v1h-1zM75 52h1v1h-1zM75 2h1v1h-1zM125 552h1v1h-1zM125 502h1v1h-1zM125 452h1v1h-1zM125 402h1v1h-1zM125 352h1v1h-1zM125 302h1v1h-1zM125 252h1v1h-1zM125 202h1v1h-1zM125 152h1v1h-1zM125 102h1v1h-1zM125 52h1v1h-1zM125 2h1v1h-1zM175 552h1v1h-1zM175 502h1v1h-1zM175 452h1v1h-1zM175 402h1v1h-1zM175 352h1v1h-1zM175 302h1v1h-1zM175 252h1v1h-1zM175 202h1v1h-1zM175 152h1v1h-1zM175 102h1v1h-1zM175 52h1v1h-1zM175 2h1v1h-1zM225 552h1v1h-1zM225 502h1v1h-1zM225 452h1v1h-1zM225 402h1v1h-1zM225 352h1v1h-1zM225 302h1v1h-1zM225 252h1v1h-1zM225 202h1v1h-1zM225 152h1v1h-1zM225 102h1v1h-1zM225 52h1v1h-1zM225 2h1v1h-1zM275 552h1v1h-1zM275 502h1v1h-1zM275 452h1v1h-1zM275 402h1v1h-1zM275 352h1v1h-1zM275 302h1v1h-1zM275 252h1v1h-1zM275 202h1v1h-1zM275 152h1v1h-1zM275 102h1v1h-1zM275 52h1v1h-1zM275 2h1v1h-1zM325 552h1v1h-1zM325 502h1v1h-1zM325 452h1v1h-1zM325 402h1v1h-1zM325 352h1v1h-1zM325 302h1v1h-1zM325 252h1v1h-1zM325 202h1v1h-1zM325 152h1v1h-1zM325 102h1v1h-1zM325 52h1v1h-1zM325 2h1v1h-1zM375 552h1v1h-1zM375 502h1v1h-1zM375 452h1v1h-1zM375 402h1v1h-1zM375 352h1v1h-1zM375 302h1v1h-1zM375 252h1v1h-1zM375 202h1v1h-1zM375 152h1v1h-1zM375 102h1v1h-1zM375 52h1v1h-1zM375 2h1v1h-1zM425 552h1v1h-1zM425 502h1v1h-1zM425 452h1v1h-1zM425 402h1v1h-1zM425 352h1v1h-1zM425 302h1v1h-1zM425 252h1v1h-1zM425 202h1v1h-1zM425 152h1v1h-1zM425 102h1v1h-1zM425 52h1v1h-1zM425 2h1v1h-1zM475 552h1v1h-1zM475 502h1v1h-1zM475 452h1v1h-1zM475 402h1v1h-1zM475 352h1v1h-1zM475 302h1v1h-1zM475 252h1v1h-1zM475 202h1v1h-1zM475 152h1v1h-1zM475 102h1v1h-1zM475 52h1v1h-1zM475 2h1v1h-1zM525 552h1v1h-1zM525 502h1v1h-1zM525 452h1v1h-1zM525 402h1v1h-1zM525 352h1v1h-1zM525 302h1v1h-1zM525 252h1v1h-1zM525 202h1v1h-1zM525 152h1v1h-1zM525 102h1v1h-1zM525 52h1v1h-1zM525 2h1v1h-1zM575 552h1v1h-1zM575 502h1v1h-1zM575 452h1v1h-1zM575 402h1v1h-1zM575 352h1v1h-1zM575 302h1v1h-1zM575 252h1v1h-1zM575 202h1v1h-1zM575 152h1v1h-1zM575 102h1v1h-1zM575 52h1v1h-1zM575 2h1v1h-1zM625 552h1v1h-1zM625 502h1v1h-1zM625 452h1v1h-1zM625 402h1v1h-1zM625 352h1v1h-1zM625 302h1v1h-1zM625 252h1v1h-1zM625 202h1v1h-1zM625 152h1v1h-1zM625 102h1v1h-1zM625 52h1v1h-1zM625 2h1v1h-1zM675 552h1v1h-1zM675 502h1v1h-1zM675 452h1v1h-1zM675 402h1v1h-1zM675 352h1v1h-1zM675 302h1v1h-1zM675 252h1v1h-1zM675 202h1v1h-1zM675 152h1v1h-1zM675 102h1v1h-1zM675 52h1v1h-1zM675 2h1v1h-1zM725 552h1v1h-1zM725 502h1v1h-1zM725 452h1v1h-1zM725 402h1v1h-1zM725 352h1v1h-1zM725 302h1v1h-1zM725 252h1v1h-1zM725 202h1v1h-1zM725 152h1v1h-1zM725 102h1v1h-1zM725 52h1v1h-1zM725 2h1v1h-1zM775 552h1v1h-1zM775 502h1v1h-1zM775 452h1v1h-1zM775 402h1v1h-1zM775 352h1v1h-1zM775 302h1v1h-1zM775 252h1v1h-1zM775 202h1v1h-1zM775 152h1v1h-1zM775 102h1v1h-1zM775 52h1v1h-1zM775 2h1v1h-1zM825 552h1v1h-1zM825 502h1v1h-1zM825 452h1v1h-1zM825 402h1v1h-1zM825 352h1v1h-1zM825 302h1v1h-1zM825 252h1v1h-1zM825 202h1v1h-1zM825 152h1v1h-1zM825 102h1v1h-1zM825 52h1v1h-1zM825 2h1v1h-1zM875 552h1v1h-1zM875 502h1v1h-1zM875 452h1v1h-1zM875 402h1v1h-1zM875 352h1v1h-1zM875 302h1v1h-1zM875 252h1v1h-1zM875 202h1v1h-1zM875 152h1v1h-1zM875 102h1v1h-1zM875 52h1v1h-1zM875 2h1v1h-1zM925 552h1v1h-1zM925 502h1v1h-1zM925 452h1v1h-1zM925 402h1v1h-1zM925 352h1v1h-1zM925 302h1v1h-1zM925 252h1v1h-1zM925 202h1v1h-1zM925 152h1v1h-1zM925 102h1v1h-1zM925 52h1v1h-1zM925 2h1v1h-1zM975 552h1v1h-1zM975 502h1v1h-1zM975 452h1v1h-1zM975 402h1v1h-1zM975 352h1v1h-1zM975 302h1v1h-1zM975 252h1v1h-1zM975 202h1v1h-1zM975 152h1v1h-1zM975 102h1v1h-1zM975 52h1v1h-1zM975 2h1v1h-1zM1025 552h1v1h-1zM1025 502h1v1h-1zM1025 452h1v1h-1zM1025 402h1v1h-1zM1025 352h1v1h-1zM1025 302h1v1h-1zM1025 252h1v1h-1zM1025 202h1v1h-1zM1025 152h1v1h-1zM1025 102h1v1h-1zM1025 52h1v1h-1zM1025 2h1v1h-1z" fill="#404040"/>
<path d="M5 552H45M25 532V572" stroke="#5a0c0c" stroke-width="1.2" fill="none"/>
<path d="M724.5 33H506.5M325 137.7V402H775" fill="none" stroke="#b4b4b4" stroke-width="2" stroke-linejoin="miter"/>
<path d="M506.5 33L325 137.7" fill="none" stroke="#ededed" stroke-width="1.5" stroke-linecap="round"/>
<path d="M325 289.5H776" stroke="#f6f6f6" stroke-width="1.3"/>
<path d="M718.8 33H724.5" stroke="#c07070" stroke-width="2"/><path d="M724.5 33H730" stroke="#5a0000" stroke-width="2"/>
<g stroke="#b00808" stroke-width="1.2" fill="none"><circle cx="724.5" cy="33" r="5.4"/><path d="M724.5 27.2V38.8"/></g>
<defs><linearGradient id="kg" x1="0" y1="0" x2="1" y2="1"><stop offset="0" stop-color="#ffffff"/><stop offset="1" stop-color="#d4d4d4"/></linearGradient></defs>
<g fill="none"><circle cx="525" cy="201.8" r="32.3" stroke="#151b20" stroke-width="1.4"/><circle cx="525" cy="201.8" r="33.8" stroke="#27313a" stroke-width="1.4"/><circle cx="525" cy="201.8" r="35.3" stroke="#3f4c57" stroke-width="1.4"/><circle cx="525" cy="201.8" r="36.7" stroke="#566572" stroke-width="1.4"/><circle cx="525" cy="201.8" r="38.0" stroke="#687a89" stroke-width="1.4"/><circle cx="525" cy="201.8" r="39.1" stroke="#5a6a78" stroke-width="1"/></g>
<path d="M509.5 201.8H540.5M525 186.3V217.3" stroke="#c8c8c8" stroke-width="3.5"/>
<circle cx="525" cy="201.8" r="1.5" fill="#111"/>
<rect x="439.0" y="250.7" width="72" height="72" rx="8" fill="url(#kg)" stroke="#6a6a6a" stroke-width="3"/>
<rect x="531.0" y="250.7" width="72" height="72" rx="8" fill="url(#kg)" stroke="#6a6a6a" stroke-width="3"/>
<path d="M468.3 279.9H480.5L474.2 289.1Q481.6 289.1 481.6 294.6Q481.6 300 475.5 300H468" fill="none" stroke="#111" stroke-width="1.9"/>
<path d="M560.3 283.6Q561.5 279.8 566.6 279.8Q573.3 279.8 573.3 285.2Q573.3 288.5 569 292.2L560.3 300H574" fill="none" stroke="#111" stroke-width="1.9"/>
</svg>
</div>
<div id="rpanel" class="a"></div>
<div id="rdock" class="a"></div>
<svg class="a" style="left:1154px;top:107px" width="346" height="691" viewBox="1154 107 346 691">
<defs>
<linearGradient id="rt" x1="0" y1="0" x2="0" y2="1"><stop offset="0" stop-color="#ececec"/><stop offset="1" stop-color="#d9d9d9"/></linearGradient>
<linearGradient id="rb" x1="0" y1="0" x2="0" y2="1"><stop offset="0" stop-color="#e6e6e6"/><stop offset="0.35" stop-color="#f3f3f3"/><stop offset="1" stop-color="#ebebeb"/></linearGradient>
<linearGradient id="rd" x1="0" y1="0" x2="1" y2="0"><stop offset="0" stop-color="#eaeaea"/><stop offset="0.6" stop-color="#d8d8d8"/><stop offset="1" stop-color="#c2c2c2"/></linearGradient>
<g id="eye"><path d="M-9 0Q-4.5 -6.5 1 -6Q6 -5.5 9 0Q5 5.5 0 5.5Q-5 5.5 -9 0Z"/><circle cx="0" cy="-0.3" r="3.6" fill="#fff"/><circle cx="0" cy="-0.3" r="2.2"/><path d="M-8 -2L-10 -3.5M-7 -4L-8.5 -6M8 -2L10 -3.5" stroke-width="1"/></g>
<g id="pen"><path d="M0 0L1.5 -4.5L13 -16Q14.5 -17 15.5 -16Q16.5 -15 15.5 -13.5L4.5 -1.5Z" fill="#eab040" stroke="#8a5a18" stroke-width="0.7"/><path d="M12.5 -15.5L15.2 -12.8" stroke="#e02020" stroke-width="2.2"/><path d="M0 0L1.5 -4.5L4.5 -1.5Z" fill="#f4dcb0"/><path d="M0 0L0.6 -1.8L1.8 -0.6Z" fill="#333"/></g>
<g id="frm"><rect x="0.5" y="0.5" width="27.5" height="27" fill="#fff" stroke="#000" stroke-width="1"/><rect x="0.5" y="0.5" width="27.5" height="4.5" fill="#000"/><rect x="1.6" y="1.5" width="2.6" height="2.6" fill="#fff"/></g>
</defs>
<rect x="1154" y="107" width="1" height="691" fill="#c8c8c8"/>
<rect x="1155" y="107" width="300" height="691" fill="#fff"/>
<rect x="1155" y="107" width="300" height="23" fill="url(#rt)"/>
<text x="1322" y="123.3" font-family="Liberation Sans" font-size="12.5" fill="#222" text-anchor="middle" textLength="50" lengthAdjust="spacingAndGlyphs">Lagenlijst</text>
<circle cx="1163.8" cy="118" r="6.9" fill="#6e6e6e"/><path d="M1161 115.2L1166.6 120.8M1166.6 115.2L1161 120.8" stroke="#fff" stroke-width="1.6"/>
<circle cx="1182" cy="118" r="6.9" fill="#6e6e6e"/><rect x="1180.3" y="114.5" width="5" height="4" fill="none" stroke="#fff" stroke-width="1"/><rect x="1178.5" y="116.8" width="5" height="4" fill="#6e6e6e" stroke="#fff" stroke-width="1"/>
<rect x="1156" y="131" width="58.5" height="24.5" fill="url(#rb)" stroke="#a4a4a4" stroke-width="2"/>
<rect x="1216" y="131" width="58.5" height="24.5" fill="url(#rb)" stroke="#a4a4a4" stroke-width="2"/>
<rect x="1276" y="131" width="58.5" height="24.5" fill="url(#rb)" stroke="#a4a4a4" stroke-width="2"/>
<rect x="1336" y="131" width="58.5" height="24.5" fill="url(#rb)" stroke="#a4a4a4" stroke-width="2"/>
<rect x="1396" y="131" width="58.5" height="24.5" fill="url(#rb)" stroke="#a4a4a4" stroke-width="2"/>
<g transform="translate(1185 143) scale(0.8)"><use href="#eye" fill="#000" stroke="#000"/></g>
<g transform="translate(1245 143) scale(0.8)"><use href="#eye" fill="#a8a8a8" stroke="#a8a8a8"/></g>
<path d="M1299 143H1311M1305 137V149" stroke="#e00000" stroke-width="3"/>
<path d="M1359 143H1371" stroke="#e00000" stroke-width="3.5"/>
<use href="#pen" x="1417.5" y="149.5"/>
<rect x="1161.5" y="163.5" width="15" height="8" fill="#fff" stroke="#000" stroke-width="1"/>
<text x="1182.5" y="171.2" font-family="Liberation Sans" font-size="12.5" fill="#111">0</text>
<g transform="translate(1394.5 173.8) scale(0.85)"><use href="#pen"/></g>
<g transform="translate(1422.8 166) scale(0.8)"><use href="#eye" fill="#000" stroke="#000"/></g>
<path d="M1441.5 166V163Q1441.5 159.5 1445 159.5Q1448.5 159.5 1448.5 163V166" fill="none" stroke="#b4b4b4" stroke-width="1.6"/><rect x="1440" y="166" width="10.5" height="8" fill="#b4b4b4"/>
<rect x="1455" y="107" width="45" height="691" fill="url(#rd)"/>
<rect x="1454.5" y="107" width="1" height="691" fill="#c4c4c4"/>
<rect x="1463" y="116" width="2" height="2" fill="#a8a8a8"/><rect x="1469" y="116" width="2" height="2" fill="#a8a8a8"/><rect x="1475" y="116" width="2" height="2" fill="#a8a8a8"/><rect x="1481" y="116" width="2" height="2" fill="#a8a8a8"/><rect x="1487" y="116" width="2" height="2" fill="#a8a8a8"/>
<rect x="1456.5" y="120" width="43.5" height="43" rx="6" fill="#b8b8b8"/>
<rect x="1456.5" y="417" width="43.5" height="43" rx="6" fill="#b8b8b8"/>
<line x1="1457" y1="262" x2="1500" y2="262" stroke="#8a8a8a" stroke-width="1" stroke-dasharray="1 2"/>
<line x1="1457" y1="410" x2="1500" y2="410" stroke="#8a8a8a" stroke-width="1" stroke-dasharray="1 2"/>
<use href="#frm" x="1463" y="127"/>
<use href="#frm" x="1463" y="174"/>
<use href="#frm" x="1463" y="220"/>
<use href="#frm" x="1463" y="276"/>
<use href="#frm" x="1463" y="322"/>
<use href="#frm" x="1463" y="368"/>
<use href="#frm" x="1463" y="424"/>
<use href="#frm" x="1463" y="471"/>
<path d="M1470.5 138L1474 136.5V149L1470.5 150.5Z" fill="#888" stroke="#333" stroke-width="0.6"/><path d="M1474 136.5L1482.5 133.5V146L1474 149Z" fill="#fff" stroke="#333" stroke-width="0.7"/><path d="M1476 145.5L1480 138L1480.5 144.5Z" fill="none" stroke="#f03030" stroke-width="0.8"/>
<rect x="1470.5" y="183.5" width="10" height="7.5" fill="#f6eac0" stroke="#555" stroke-width="0.7"/><circle cx="1478.5" cy="191" r="4.6" fill="#f6eac0" stroke="#555" stroke-width="0.7"/>
<rect x="1468.5" y="230.5" width="17" height="11.5" rx="2.5" fill="#f4f4f4" stroke="#c4d4ec" stroke-width="0.8"/>
<g fill="#000"><rect x="1465" y="283.3" width="4" height="3.2" rx="0.8"/><rect x="1465" y="289.8" width="4" height="3.2" rx="0.8"/><rect x="1465" y="296.3" width="4" height="3.2" rx="0.8"/></g><g fill="none" stroke="#333" stroke-width="0.7"><rect x="1471.5" y="283.5" width="15.5" height="3"/><rect x="1471.5" y="290" width="15.5" height="3"/><rect x="1471.5" y="296.5" width="15.5" height="3"/></g>
<path d="M1469 331.5Q1477 328.5 1485 331.5L1479.5 338V347.5L1476 345V338Z" fill="#b0b0b0" stroke="#444" stroke-width="0.7"/><ellipse cx="1477" cy="331.3" rx="7.5" ry="1.6" fill="#d8d8d8" stroke="#444" stroke-width="0.6"/>
<path d="M1469.5 376V391L1472.5 387.5H1480V380H1472.5Z" fill="#fff" stroke="#333" stroke-width="0.8"/><rect x="1474" y="380" width="9" height="7.5" rx="2" fill="#888"/><path d="M1467 384H1488" stroke="#f08080" stroke-width="0.6" stroke-dasharray="1 1"/>
<g stroke="#9a9a9a" stroke-width="0.8"><path d="M1465.5 434.5H1474.5M1465.5 437.5H1473M1465.5 440.5H1476M1465.5 443.5H1477"/></g><path d="M1463.5 446.5H1491" stroke="#000" stroke-width="0.8"/><path d="M1465.5 449.5L1467.5 448M1471 449.5H1489" stroke="#777" stroke-width="0.8"/>
<rect x="1471" y="480.5" width="12.5" height="14" rx="1" fill="#c88a30" stroke="#8a5a18" stroke-width="0.5"/><rect x="1472.6" y="482.3" width="9.3" height="10.7" fill="#f4f4f4"/><path d="M1474 485H1481M1474 487H1481M1474 489H1480" stroke="#bbb" stroke-width="0.5"/><rect x="1474.5" y="479.3" width="5.5" height="3" rx="0.8" fill="#999"/>
</svg>
<svg class="a" style="left:0;top:798px" width="1500" height="46" viewBox="0 798 1500 46">
<rect x="0" y="798" width="1500" height="46" fill="#dcdcdc"/>
<rect x="0" y="798" width="1500" height="1" fill="#cdcdcd"/>
<path d="M253.5 802V842" stroke="#6a6a6a" stroke-width="1"/><path d="M254.5 802V842" stroke="#f4f4f4" stroke-width="1"/><path d="M253.5 802.5H256" stroke="#6a6a6a" stroke-width="1"/>
<g font-family="Liberation Sans" font-size="9.2" fill="#1a1a1a">
<text x="2" y="815.6" textLength="30" lengthAdjust="spacing">100,70</text>
<text x="2" y="835.6" textLength="89" lengthAdjust="spacing">@-39.8714,-33.799</text>
<text x="256" y="815.6" textLength="65" lengthAdjust="spacing">122.0656&lt;35°</text>
<text x="256" y="835.6" textLength="74" lengthAdjust="spacing">@52.2695&lt;220°</text>
<text x="668.8" y="825.5" textLength="29.5" lengthAdjust="spacing">Positie</text>
<text x="754.5" y="825.5" textLength="39" lengthAdjust="spacing">Annuleer</text>
<text x="949" y="825.5" textLength="130" lengthAdjust="spacing">Geen objecten geselecteerd.</text>
</g>
<circle cx="509.5" cy="822" r="3" fill="#c4c4c4"/>
<circle cx="943" cy="822" r="3" fill="#c4c4c4"/>
<circle cx="1272" cy="822" r="3" fill="#c4c4c4"/>
<rect x="717.5" y="806.3" width="17.5" height="29.2" rx="8.75" fill="#fff" stroke="#444" stroke-width="0.8"/>
<path d="M717.8 817Q726.2 816 734.7 817" stroke="#444" stroke-width="1.3" fill="none"/><path d="M726.2 806.5V817" stroke="#444" stroke-width="0.8"/><rect x="724.8" y="808.5" width="2.8" height="5.8" rx="1.4" fill="#fff" stroke="#444" stroke-width="0.8"/>
</svg>
</div></body></html>
